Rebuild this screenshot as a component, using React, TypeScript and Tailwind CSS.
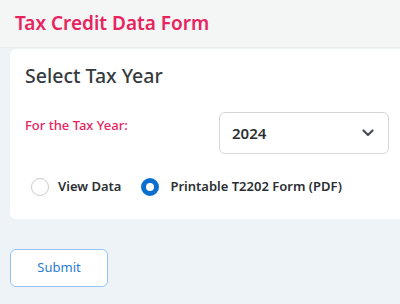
import { useState } from 'react'

export default function App() {
  const [mode, setMode] = useState<'view' | 'pdf'>('pdf')

  return (
    <div
      className="min-h-screen w-[400px] h-[304px] overflow-hidden bg-[#eef3f8]"
      style={{ fontFamily: '"Noto Sans", "Open Sans", sans-serif' }}
    >
      {/* Header */}
      <header className="h-[48px] bg-[#f4f6f6] border-b border-[#e6eaea] flex items-center px-[15px]">
        <h1 className="text-[19px] font-semibold text-[#e8245f] leading-none">Tax Credit Data Form</h1>
      </header>

      {/* Card */}
      <div className="ml-[10px] mt-px bg-white rounded-l-md h-[170px] pl-[15px] pr-[11px] pt-[14px]">
        <h2 className="text-[19.5px] font-medium text-[#363b40] leading-[26px]">Select Tax Year</h2>

        <div className="flex items-start justify-between mt-[23px]">
          <label className="text-[13px] font-medium text-[#e8245f] leading-[20px] mt-[3px]">For the Tax Year:</label>
          <button className="w-[170px] h-[42px] rounded-md border border-[#d3d6d9] flex items-center justify-between pl-[12px] pr-[14px] bg-white">
            <span className="text-[15px] font-semibold text-[#2b2f33]">2024</span>
            <svg width="12" height="8" viewBox="0 0 12 8" fill="none">
              <path d="M1.5 1.5L6 6L10.5 1.5" stroke="#4a4f54" strokeWidth="2.2" strokeLinecap="round" strokeLinejoin="round" />
            </svg>
          </button>
        </div>

        <div className="flex items-center mt-[23px] pl-[6px]">
          <button onClick={() => setMode('view')} className="flex items-center gap-[9px]">
            <span
              className={
                mode === 'view'
                  ? 'w-[18px] h-[18px] rounded-full border-[5px] border-[#0b6fd0] bg-white'
                  : 'w-[18px] h-[18px] rounded-full border border-[#c8cbce] bg-white'
              }
            />
            <span className="text-[13px] font-semibold text-[#2b2f33]">View Data</span>
          </button>
          <button onClick={() => setMode('pdf')} className="flex items-center gap-[11px] ml-[20px]">
            <span
              className={
                mode === 'pdf'
                  ? 'w-[18px] h-[18px] rounded-full border-[5px] border-[#0b6fd0] bg-white'
                  : 'w-[18px] h-[18px] rounded-full border border-[#c8cbce] bg-white'
              }
            />
            <span className="text-[13px] font-semibold text-[#2b2f33]">Printable T2202 Form (PDF)</span>
          </button>
        </div>
      </div>

      {/* Submit */}
      <div className="px-[10px] mt-[30px]">
        <button className="w-[98px] h-[38px] rounded-md border border-[#94c4f2] bg-white text-[13px] text-[#2b7bd0]">
          Submit
        </button>
      </div>
    </div>
  )
}
